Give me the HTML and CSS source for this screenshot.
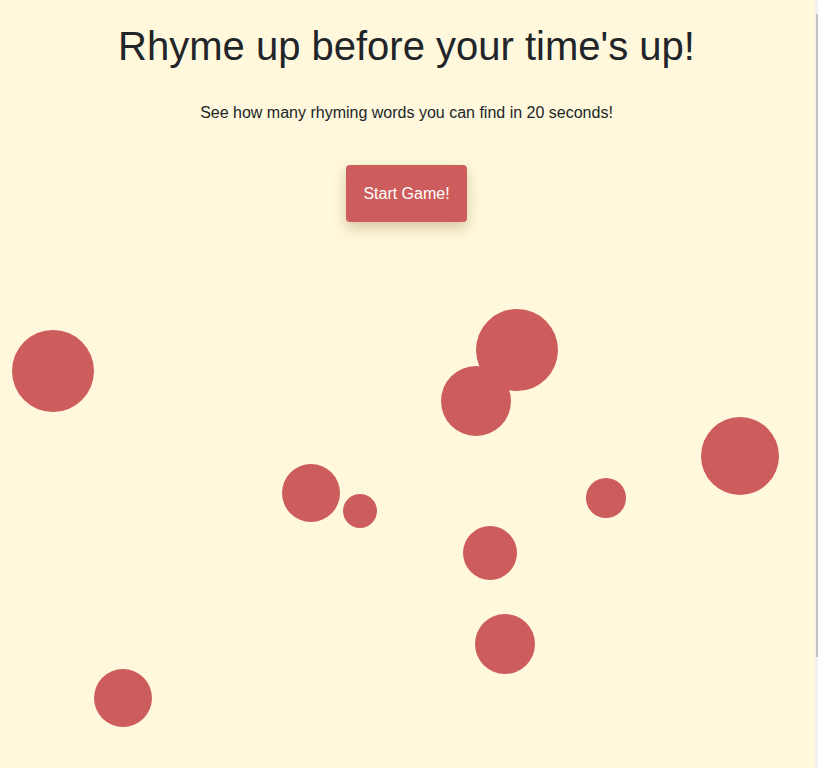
FILE: index.html
```html
<!DOCTYPE html>
<html lang="en">
<head>
<meta charset="utf-8">
<title>Rhyme up before your time's up!</title>
<link rel="stylesheet" href="styles.css">
</head>
<body>
<main class="intro">
  <h1 class="title">Rhyme up before your time's up!</h1>
  <p class="lead">See how many rhyming words you can find in 20 seconds!</p>
  <button class="start-btn" type="button">Start Game!</button>
</main>
<div class="bubbles">
  <span class="bubble" style="left:12px;top:330px;width:82px;height:82px"></span>
  <span class="bubble" style="left:476px;top:309px;width:82px;height:82px"></span>
  <span class="bubble" style="left:441px;top:366px;width:70px;height:70px"></span>
  <span class="bubble" style="left:282px;top:464px;width:58px;height:58px"></span>
  <span class="bubble" style="left:343px;top:494px;width:34px;height:34px"></span>
  <span class="bubble" style="left:701px;top:417px;width:78px;height:78px"></span>
  <span class="bubble" style="left:586px;top:478px;width:40px;height:40px"></span>
  <span class="bubble" style="left:463px;top:526px;width:54px;height:54px"></span>
  <span class="bubble" style="left:475px;top:614px;width:60px;height:60px"></span>
  <span class="bubble" style="left:94px;top:669px;width:58px;height:58px"></span>
</div>
<div class="scroll-track"><div class="scroll-thumb"></div></div>
</body>
</html>
```
FILE: styles.css
```css
html, body {
  margin: 0;
  padding: 0;
  height: 100%;
  overflow: hidden;
}
body {
  background: #fff8dc;
  color: #212529;
  font-family: "Liberation Sans", Arial, sans-serif;
  position: relative;
}
.intro {
  display: flex;
  flex-direction: column;
  align-items: center;
  padding-top: 22px;
  padding-right: 5px;
  text-align: center;
}
.title {
  margin: 0;
  font-size: 40px;
  font-weight: 400;
  line-height: 48px;
}
.lead {
  margin: 31px 0 0;
  font-size: 16px;
  line-height: 24px;
}
.start-btn {
  margin-top: 40px;
  background: #cd5c5c;
  color: #fff;
  border: none;
  border-radius: 4px;
  padding: 16px 17px;
  font-family: inherit;
  font-size: 16px;
  line-height: 25px;
  box-shadow: 0 6px 14px rgba(120, 90, 40, 0.3);
  cursor: pointer;
}
.bubbles {
  position: absolute;
  inset: 0;
  pointer-events: none;
}
.bubble {
  position: absolute;
  border-radius: 50%;
  background: #cd5c5c;
}
.scroll-track {
  position: fixed;
  top: 0;
  right: 0;
  width: 3px;
  height: 100%;
  background: #f1f1f1;
}
.scroll-thumb {
  margin-top: 14px;
  margin-left: 1px;
  width: 2px;
  height: 643px;
  background: #c1c1c1;
}
```
